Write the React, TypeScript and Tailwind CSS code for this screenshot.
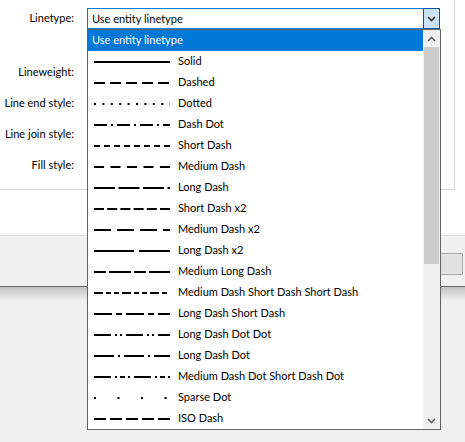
const font = { fontFamily: 'Lato, "Noto Sans", sans-serif' };

interface LineItem {
  name: string;
  dash?: string;
}

const items: LineItem[] = [
  { name: "Solid" },
  { name: "Dashed", dash: "11 5" },
  { name: "Dotted", dash: "2 6.4" },
  { name: "Dash Dot", dash: "13 4 2 4" },
  { name: "Short Dash", dash: "6 4" },
  { name: "Medium Dash", dash: "10 6.5" },
  { name: "Long Dash", dash: "21 3.5" },
  { name: "Short Dash x2", dash: "10 3.2" },
  { name: "Medium Dash x2", dash: "17 6" },
  { name: "Long Dash x2", dash: "40 5" },
  { name: "Medium Long Dash", dash: "12 3 22 3" },
  { name: "Medium Dash Short Dash Short Dash", dash: "9 3 5 3 5 3" },
  { name: "Long Dash Short Dash", dash: "18 4 6 4" },
  { name: "Long Dash Dot Dot", dash: "17 4 2 3 2 4" },
  { name: "Long Dash Dot", dash: "20 4 2 4" },
  { name: "Medium Dash Dot Short Dash Dot", dash: "17 4 2 3 5 3 2 4" },
  { name: "Sparse Dot", dash: "2 21.5" },
  { name: "ISO Dash", dash: "12 4" },
];

const labels = ["Lineweight:", "Line end style:", "Line join style:", "Fill style:"];

function Sample({ dash }: { dash?: string }) {
  return (
    <svg width="76" height="2" className="shrink-0">
      <line x1="0" y1="1" x2="76" y2="1" stroke="#000" strokeWidth="2" strokeDasharray={dash} />
    </svg>
  );
}

function Chevron({ up }: { up?: boolean }) {
  return (
    <svg width="9" height="6" viewBox="0 0 9 6">
      <path
        d={up ? "M1 5 L4.5 1.5 L8 5" : "M1 1 L4.5 4.5 L8 1"}
        fill="none"
        stroke="currentColor"
        strokeWidth="1.6"
      />
    </svg>
  );
}

export default function App() {
  return (
    <div className="relative w-[465px] h-[442px] overflow-hidden bg-[#f0f0f0] text-[11px] text-black" style={font}>
      {/* dialog */}
      <div className="flex flex-col h-[287px] bg-white border-b border-[#646464]">
        <div className="h-[190px] w-[455px] border-r border-b border-[#dcdcdc] pt-[8px]">
          <div className="flex items-center h-[21px]">
            <div className="w-[74px] text-right whitespace-nowrap">Linetype:</div>
          </div>
          <div className="flex flex-col gap-[10px] mt-[33px]">
            {labels.map((l) => (
              <div key={l} className="flex items-center h-[21px]">
                <div className="w-[74px] text-right whitespace-nowrap">{l}</div>
              </div>
            ))}
          </div>
        </div>
        <div className="h-[46px] border-b border-[#dfdfdf]" />
        <div className="flex-1 bg-[#f0f0f0] flex justify-end items-start pt-[17px] pr-[2px]">
          <div className="w-[80px] h-[22px] bg-[#e1e1e1] border border-[#adadad]" />
        </div>
      </div>
      <div className="h-[14px] bg-gradient-to-b from-[#c4c4c4] to-[#f0f0f0]" />

      {/* combo box */}
      <div className="absolute left-[87px] top-[8px] w-[353px] h-[21px] flex border border-[#0078d7] bg-white">
        <div className="flex-1 flex items-center pl-[4px] leading-none">Use entity linetype</div>
        <div className="w-[17px] -my-px -mr-px flex items-center justify-center bg-[#cce4f7] border border-[#005499] text-[#333]">
          <Chevron />
        </div>
      </div>

      {/* dropdown list */}
      <div className="absolute left-[87px] top-[29px] w-[354px] h-[401px] flex bg-white border border-[#646464]">
        <div className="flex-1 flex flex-col">
          <div className="h-[21px] flex items-center pl-[4px] bg-[#0078d7] text-white">Use entity linetype</div>
          {items.map((it) => (
            <div key={it.name} className="h-[21px] flex items-center pl-[6px] gap-[8px]">
              <Sample dash={it.dash} />
              <span className="whitespace-nowrap">{it.name}</span>
            </div>
          ))}
        </div>
        <div className="w-[17px] flex flex-col bg-[#f0f0f0] text-[#606060]">
          <div className="h-[17px] flex items-center justify-center">
            <Chevron up />
          </div>
          <div className="h-[217px] mx-[1px] bg-[#cdcdcd]" />
          <div className="flex-1" />
          <div className="h-[17px] flex items-center justify-center">
            <Chevron />
          </div>
        </div>
      </div>
    </div>
  );
}
